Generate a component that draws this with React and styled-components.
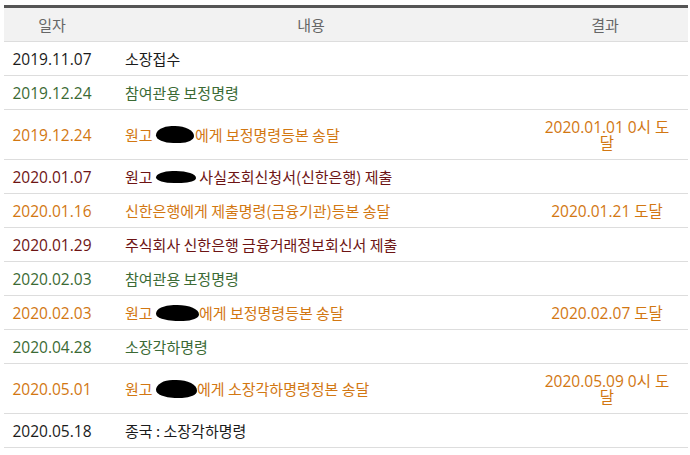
import React from 'react';
import styled, { createGlobalStyle } from 'styled-components';

const GlobalStyle = createGlobalStyle`
  body {
    margin: 0;
    background: #fff;
    font-family: "Noto Sans CJK KR", "Noto Sans", sans-serif;
  }
`;

const tones = {
  plain: '#1b1b1b',
  green: '#3b6a34',
  orange: '#d27712',
  red: '#6d1414',
};

const Table = styled.table`
  margin: 5px 0 0 4px;
  width: 684px;
  border-collapse: collapse;
  border-top: 3px solid #555;
  table-layout: fixed;
`;

const Th = styled.th`
  background: #f2f2f2;
  color: #666;
  font-family: "Noto Sans CJK KR", sans-serif;
  font-size: 15px;
  font-weight: normal;
  line-height: 16px;
  padding: 9px 0 8px;
  border-bottom: 1px solid #ddd;
  text-align: center;
  width: ${(p) => p.$w};
`;

const Row = styled.tr`
  color: ${(p) => tones[p.$tone]};
`;

const DateCell = styled.td`
  font-family: "Open Sans", "Noto Sans CJK KR", sans-serif;
  font-size: 15.5px;
  line-height: 16px;
  padding: 9px 0 8px;
  border-bottom: 1px solid #ddd;
  text-align: center;
`;

const TextCell = styled.td`
  font-family: "Noto Sans CJK KR", sans-serif;
  font-size: 15px;
  line-height: 16px;
  padding: 9px 10px 8px 25px;
  border-bottom: 1px solid #ddd;
  text-align: left;
  white-space: nowrap;
`;

const ResultCell = styled.td`
  font-family: "Open Sans", "Noto Sans CJK KR", sans-serif;
  font-size: 15.5px;
  line-height: 16px;
  padding: 9px 16px 8px 20px;
  border-bottom: 1px solid #ddd;
  text-align: center;
`;

// black marker scribble that hides the plaintiff's name
const Blot = styled.span`
  display: inline-block;
  width: ${(p) => p.$w}px;
  height: ${(p) => p.$h}px;
  background: #000;
  border-radius: 45% 55% 40% 50% / 60% 65% 45% 50%;
  vertical-align: middle;
  margin-top: -3px;
  margin-right: ${(p) => p.$gap}px;
`;

const rows = [
  { date: '2019.11.07', tone: 'plain', text: '소장접수' },
  { date: '2019.12.24', tone: 'green', text: '참여관용 보정명령' },
  {
    date: '2019.12.24',
    tone: 'orange',
    text: <>원고 <Blot $w={38} $h={17} $gap={1} />에게 보정명령등본 송달</>,
    result: '2020.01.01 0시 도달',
  },
  {
    date: '2020.01.07',
    tone: 'red',
    text: <>원고 <Blot $w={40} $h={12} $gap={0} /> 사실조회신청서(신한은행) 제출</>,
  },
  {
    date: '2020.01.16',
    tone: 'orange',
    text: '신한은행에게 제출명령(금융기관)등본 송달',
    result: '2020.01.21 도달',
  },
  { date: '2020.01.29', tone: 'red', text: '주식회사 신한은행 금융거래정보회신서 제출' },
  { date: '2020.02.03', tone: 'green', text: '참여관용 보정명령' },
  {
    date: '2020.02.03',
    tone: 'orange',
    text: <>원고 <Blot $w={43} $h={16} $gap={0} />에게 보정명령등본 송달</>,
    result: '2020.02.07 도달',
  },
  { date: '2020.04.28', tone: 'green', text: '소장각하명령' },
  {
    date: '2020.05.01',
    tone: 'orange',
    text: <>원고 <Blot $w={41} $h={18} $gap={0} />에게 소장각하명령정본 송달</>,
    result: '2020.05.09 0시 도달',
  },
  { date: '2020.05.18', tone: 'plain', text: '종국 : 소장각하명령' },
];

const App = () => (
  <>
    <GlobalStyle />
    <Table>
      <thead>
        <tr>
          <Th $w="96px">일자</Th>
          <Th $w="422px">내용</Th>
          <Th $w="166px">결과</Th>
        </tr>
      </thead>
      <tbody>
        {rows.map((row, i) => (
          <Row key={i} $tone={row.tone}>
            <DateCell>{row.date}</DateCell>
            <TextCell>{row.text}</TextCell>
            <ResultCell>{row.result}</ResultCell>
          </Row>
        ))}
      </tbody>
    </Table>
  </>
);

export default App;
